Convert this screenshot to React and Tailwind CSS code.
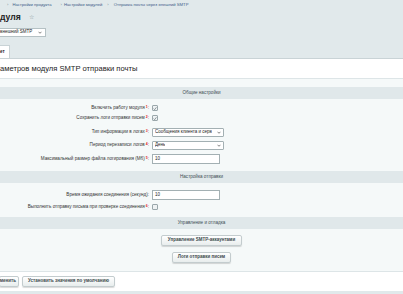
import React from "react";

const Check = ({ checked }) => (
  <div className="w-[6px] h-[6px] border border-[#9aa7ab] bg-[#eef2f3] rounded-[1px] flex items-center justify-center">
    {checked && (
      <svg width="5" height="5" viewBox="0 0 10 10">
        <path d="M1.5 5.2 L4 7.8 L8.6 2" fill="none" stroke="#5a6a6e" strokeWidth="1.6" />
      </svg>
    )}
  </div>
);

const Chevron = () => (
  <svg width="4" height="3" viewBox="0 0 8 5" className="shrink-0">
    <path d="M1 1 L4 4 L7 1" fill="none" stroke="#333" strokeWidth="1.2" />
  </svg>
);

const Req = ({ n }) => <sup className="text-[#e0201e] text-[3.5px] font-bold relative top-[-1px] ml-[1px]">{n}</sup>;

const Row = ({ label, req, h, mt = "", children }) => (
  <div className={`flex items-center ${h} ${mt}`}>
    <div className="w-[149px] text-right text-[4.6px] text-[#333] whitespace-nowrap">
      {label}
      {req && <Req n={req} />}:
    </div>
    <div className="ml-[3px] flex items-center">{children}</div>
  </div>
);

const Select = ({ text, w }) => (
  <div className={`${w} h-[9px] bg-white border border-[#a3b0b3] rounded-[1px] flex items-center justify-between px-[2px] text-[4.5px] text-[#222] overflow-hidden`}>
    <span className="whitespace-nowrap overflow-hidden">{text}</span>
    <Chevron />
  </div>
);

const Input = ({ text }) => (
  <div className="w-[68px] h-[10px] bg-white border border-[#a3b0b3] flex items-center px-[2px] text-[4.5px] text-[#222]">
    {text}
  </div>
);

const Bar = ({ text, mt }) => (
  <div className={`h-[12px] ${mt} bg-[#e0e8ea] flex items-center justify-center text-[4.6px] text-[#3f4f54]`}>
    {text}
  </div>
);

const Btn = ({ children, cls = "" }) => (
  <div className={`h-[11px] px-[4px] flex items-center justify-center rounded-[2px] border border-[#c3ccce] bg-gradient-to-b from-white to-[#e8eded] shadow-[0_1px_1px_rgba(0,0,0,0.15)] text-[4.5px] font-bold text-[#3c4a4d] whitespace-nowrap ${cls}`}>
    {children}
  </div>
);

export default function App() {
  return (
    <div className="w-[403px] h-[294px] overflow-hidden bg-[#e1e9eb] flex flex-col" style={{ fontFamily: '"Liberation Sans", Arial, sans-serif' }}>
      {/* breadcrumbs */}
      <div className="h-[10px] flex items-center text-[4.2px] text-[#42608a] whitespace-nowrap">
        <span className="ml-[7px] text-[#7a8c94]">›</span>
        <span className="ml-[4px]">Настройки продукта</span>
        <span className="ml-[9px] text-[#7a8c94]">›</span>
        <span className="ml-[2px]">Настройки модулей</span>
        <span className="ml-[5px] text-[#7a8c94]">›</span>
        <span className="ml-[5px]">Отправка почты через внешний SMTP</span>
      </div>
      {/* title */}
      <div className="h-[14px] flex items-center">
        <span className="text-[8.6px] font-bold text-[#222] leading-none">дуля</span>
        <span className="ml-[8px] text-[6px] text-[#8a989c] leading-none">☆</span>
      </div>
      {/* module select */}
      <div className="mt-[4px] w-[46px] h-[9px] bg-white border border-[#b5c1c4] border-l-0 flex items-center justify-between pr-[3px] text-[4.5px] text-[#222]">
        <span className="whitespace-nowrap">внешний SMTP</span>
        <Chevron />
      </div>
      {/* tab */}
      <div className="mt-[8px] w-[10px] h-[13px] bg-white border-r border-t border-[#c9d3d6] flex items-center text-[4.5px] font-bold text-[#222]">
        ет
      </div>
      {/* panel */}
      <div className="bg-white border-t border-[#c9d3d6]">
        <div className="h-[20px] flex items-center text-[7.6px] text-[#222] border-b border-[#dde5e7] whitespace-nowrap">
          аметров модуля SMTP отправки почты
        </div>
        <div className="bg-[#f5f9f9] pt-[8px] pb-[8px] border-b border-[#dde5e7]">
          <Bar text="Общие настройки" />
          <Row label="Включить работу модуля" req="1" h="h-[10px]" mt="mt-[4px]">
            <Check checked />
          </Row>
          <Row label="Сохранить логи отправки писем" req="2" h="h-[10px]">
            <Check checked />
          </Row>
          <Row label="Тип информации в логах" req="3" h="h-[14px]" mt="mt-[2px]">
            <Select text="Сообщения клиента и серв" w="w-[72px]" />
          </Row>
          <Row label="Период перезаписи логов" req="4" h="h-[12px]">
            <Select text="День" w="w-[72px]" />
          </Row>
          <Row label="Максимальный размер файла логирования (Мб)" req="5" h="h-[16px]">
            <Input text="10" />
          </Row>
          <Bar text="Настройка отправки" mt="mt-[4px]" />
          <Row label="Время ожидания соединения (секунд)" h="h-[14px]" mt="mt-[5px]">
            <Input text="10" />
          </Row>
          <Row label="Выполнить отправку письма при проверке соединения" req="6" h="h-[10px]">
            <Check />
          </Row>
          <Bar text="Управление и отладка" mt="mt-[5px]" />
          <div className="flex justify-center mt-[6px]">
            <Btn cls="w-[81px]">Управление SMTP-аккаунтами</Btn>
          </div>
          <div className="flex justify-center mt-[6px]">
            <Btn cls="w-[59px]">Логи отправки писем</Btn>
          </div>
        </div>
        <div className="h-[19px] flex items-center">
          <Btn cls="w-[20px] ml-[-1px] justify-end pr-[2px]">менить</Btn>
          <Btn cls="ml-[3px] w-[93px]">Установить значения по умолчанию</Btn>
        </div>
      </div>
    </div>
  );
}
